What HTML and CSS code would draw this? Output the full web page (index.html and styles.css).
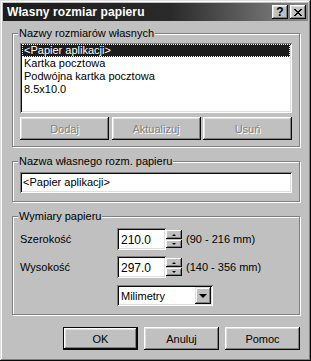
FILE: index.html
```html
<!DOCTYPE html>
<html lang="pl">
<head>
    <meta charset="UTF-8">
    <meta name="viewport" content="width=device-width, initial-scale=1.0">
    <title>Własny rozmiar papieru</title>
    <link rel="stylesheet" href="styles.css">
</head>
<body>
    <div class="window">
        <div class="titlebar">
            <span class="title">Własny rozmiar papieru</span>
            <div class="title-btns">
                <span class="tbtn help">?</span>
                <span class="tbtn close">
                    <svg width="8" height="7" viewBox="0 0 8 7" shape-rendering="crispEdges">
                        <path d="M0 0h2v1h-2zM6 0h2v1h-2zM1 1h2v1h-2zM5 1h2v1h-2zM2 2h4v1h-4zM3 3h2v1h-2zM2 4h4v1h-4zM1 5h2v1h-2zM5 5h2v1h-2zM0 6h2v1h-2zM6 6h2v1h-2z" fill="#000"/>
                    </svg>
                </span>
            </div>
        </div>

        <div class="content">
            <fieldset class="group group-names">
                <legend>Nazwy rozmiarów własnych</legend>
                <ul class="listbox">
                    <li class="selected">&lt;Papier aplikacji&gt;</li>
                    <li>Kartka pocztowa</li>
                    <li>Podwójna kartka pocztowa</li>
                    <li>8.5x10.0</li>
                </ul>
                <div class="btn-row">
                    <button class="btn" disabled>Dodaj</button>
                    <button class="btn" disabled>Aktualizuj</button>
                    <button class="btn" disabled>Usuń</button>
                </div>
            </fieldset>

            <fieldset class="group group-name">
                <legend>Nazwa własnego rozm. papieru</legend>
                <div class="textbox">&lt;Papier aplikacji&gt;</div>
            </fieldset>

            <fieldset class="group group-size">
                <legend>Wymiary papieru</legend>
                <div class="size-row">
                    <span class="label">Szerokość</span>
                    <div class="spin">
                        <div class="spin-field">210.0</div>
                        <div class="spin-btns">
                            <span class="spin-btn up"></span>
                            <span class="spin-btn down"></span>
                        </div>
                    </div>
                    <span class="range">(90 - 216 mm)</span>
                </div>
                <div class="size-row">
                    <span class="label">Wysokość</span>
                    <div class="spin">
                        <div class="spin-field">297.0</div>
                        <div class="spin-btns">
                            <span class="spin-btn up"></span>
                            <span class="spin-btn down"></span>
                        </div>
                    </div>
                    <span class="range">(140 - 356 mm)</span>
                </div>
                <div class="unit-row">
                    <div class="combo">
                        <span class="combo-text">Milimetry</span>
                        <span class="combo-btn"></span>
                    </div>
                </div>
            </fieldset>

            <div class="dialog-btns">
                <button class="btn btn-default">OK</button>
                <button class="btn">Anuluj</button>
                <button class="btn">Pomoc</button>
            </div>
        </div>
    </div>
</body>
</html>
```

FILE: styles.css
```css
*{margin:0; padding:0; box-sizing:border-box;}
body{
    background:#c0c0c0;
    font-family:"Liberation Sans", Arial, sans-serif;
    font-size:11px;
    color:#000;
}
li{list-style:none;}

.window{
    width:311px;
    height:361px;
    padding:3px;
    background:#c0c0c0;
    box-shadow:inset -1px -1px #0a0a0a, inset 1px 1px #dfdfdf,
               inset -2px -2px #808080, inset 2px 2px #fff;
}

/* title bar */
.titlebar{
    height:18px;
    display:flex;
    align-items:center;
    justify-content:space-between;
    padding:0 2px 0 4px;
    background:linear-gradient(to right, #1c1c1c 0%, #2a2a2a 55%, #8a8a8a 100%);
}
.title{
    color:#fff;
    font-weight:bold;
    font-size:12px;
    letter-spacing:0.1px;
}
.title-btns{display:flex; gap:2px;}
.tbtn{
    width:16px;
    height:14px;
    display:flex;
    align-items:center;
    justify-content:center;
    background:#c0c0c0;
    box-shadow:inset -1px -1px #0a0a0a, inset 1px 1px #fff,
               inset -2px -2px #808080, inset 2px 2px #dfdfdf;
}
.tbtn.help{font-weight:bold; font-size:12px; padding-bottom:1px;}

/* group boxes */
.content{padding:0 8px 0 9px;}
.group{
    border:1px solid #808080;
    box-shadow:1px 1px 0 #fff, inset 1px 1px 0 #fff;
    padding:3px 7px 6px 7px;
}
.group legend{
    padding:0 1px;
    margin-left:-2px;
    line-height:13px;
    background:#c0c0c0;
}
.group-names{margin-top:6px;}
.group-name{margin-top:8px; padding-top:4px; padding-bottom:8px;}
.group-size{margin-top:8px; padding-top:5px; padding-bottom:8px;}

/* sunken fields */
.listbox, .textbox, .spin-field, .combo{
    background:#fff;
    box-shadow:inset 1px 1px #808080, inset -1px -1px #fff,
               inset 2px 2px #0a0a0a, inset -2px -2px #dfdfdf;
}
.listbox{
    height:70px;
    padding:1px 2px;
}
.listbox li{
    height:13px;
    line-height:13px;
    padding-left:2px;
}
.listbox li.selected{
    background:#1c1c1c;
    color:#fff;
    outline:1px dotted #fff;
    outline-offset:-1px;
}

/* buttons */
.btn{
    font-family:inherit;
    font-size:11px;
    color:#000;
    height:23px;
    border:none;
    background:#c0c0c0;
    box-shadow:inset -1px -1px #0a0a0a, inset 1px 1px #fff,
               inset -2px -2px #808080, inset 2px 2px #dfdfdf;
}
.btn:disabled{
    color:#808080;
    text-shadow:1px 1px 0 #fff;
}
.btn-row{
    margin-top:4px;
    display:grid;
    grid-template-columns:89px 89px 89px;
    justify-content:space-between;
}

.textbox{
    height:21px;
    line-height:21px;
    padding-left:3px;
}

/* size rows */
.size-row{
    display:flex;
    align-items:center;
    height:22px;
}
.size-row + .size-row{margin-top:6px;}
.label{width:97px;}
.spin{display:flex; width:65px; height:22px;}
.spin-field{
    flex:1;
    line-height:22px;
    padding-left:4px;
    padding-top:1px;
    font-size:12px;
}
.spin-btns{
    width:16px;
    display:flex;
    flex-direction:column;
    padding:2px 0 2px;
    gap:1px;
}
.spin-btn{
    flex:1;
    position:relative;
    background:#c0c0c0;
    box-shadow:inset -1px -1px #0a0a0a, inset 1px 1px #fff,
               inset -2px -2px #808080;
}
.spin-btn::after{
    content:"";
    position:absolute;
    left:6px;
    top:4px;
    border-left:2px solid transparent;
    border-right:2px solid transparent;
}
.spin-btn.up::after{border-bottom:2px solid #000;}
.spin-btn.down::after{border-top:2px solid #000; top:3px;}
.range{margin-left:4px;}

.unit-row{margin-top:7px; padding-left:97px;}
.combo{
    width:96px;
    height:21px;
    display:flex;
    align-items:center;
    padding:2px;
}
.combo-text{flex:1; padding-left:2px;}
.combo-btn{
    width:16px;
    height:17px;
    position:relative;
    background:#c0c0c0;
    box-shadow:inset -1px -1px #0a0a0a, inset 1px 1px #dfdfdf,
               inset -2px -2px #808080, inset 2px 2px #fff;
}
.combo-btn::after{
    content:"";
    position:absolute;
    left:4px;
    top:7px;
    border-left:4px solid transparent;
    border-right:4px solid transparent;
    border-top:4px solid #000;
}

/* dialog buttons */
.dialog-btns{
    margin-top:12px;
    display:flex;
    justify-content:flex-end;
    gap:6px;
    padding-right:0;
}
.dialog-btns .btn{width:75px;}
.btn-default{
    box-shadow:inset 0 0 0 1px #0a0a0a,
               inset -2px -2px #0a0a0a, inset 2px 2px #fff,
               inset -3px -3px #808080, inset 3px 3px #dfdfdf;
}
```
